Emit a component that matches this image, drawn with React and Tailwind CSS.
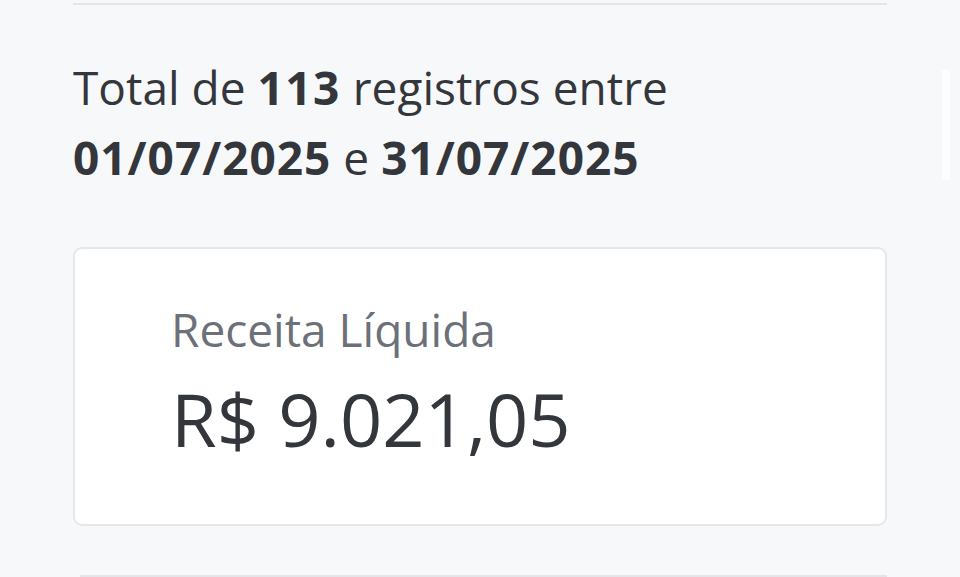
export default function App() {
  return (
    <div className="relative w-[960px] h-[577px] overflow-hidden bg-[#f7f8fa] text-[#33363b]" style={{ fontFamily: '"Open Sans", sans-serif' }}>
      <div className="absolute right-[10px] top-[70px] w-[8px] h-[110px] bg-white/70" />
      <div className="mx-[73px] pt-[3px]">
        <div className="h-[2px] bg-[#e3e5e9]" />
        <p className="mt-[47px] text-[46px] leading-[70px]">
          Total de <b className="font-bold tracking-[1.5px]">113</b> registros entre <b className="font-bold tracking-[1px]">01/07/2025</b> e <b className="font-bold tracking-[1px]">31/07/2025</b>
        </p>
        <div className="mt-[55px] h-[279px] rounded-[9px] border-2 border-[#e5e7eb] bg-white pl-[96px] pt-[52px]">
          <div className="text-[46px] leading-[56px] text-[#6c7079]">Receita Líquida</div>
          <div className="mt-[25px] text-[74px] leading-[73px]">R$ 9.021,05</div>
        </div>
        <div className="mt-[49px] ml-[7px] h-[2px] bg-[#e3e5e9]" />
      </div>
    </div>
  );
}
